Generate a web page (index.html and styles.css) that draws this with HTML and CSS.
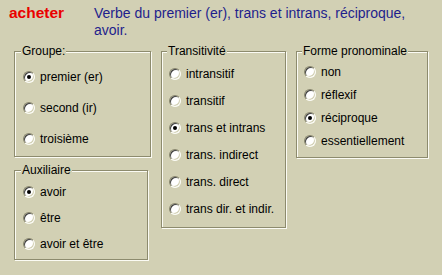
FILE: index.html
```html
<!DOCTYPE html>
<html lang="fr">
<head>
<meta charset="utf-8">
<title>acheter</title>
<link rel="stylesheet" href="styles.css">
</head>
<body>
<div class="header">
  <div class="verb">acheter</div>
  <div class="desc">Verbe du premier (er), trans et intrans, réciproque, avoir.</div>
</div>
<div class="main">
  <div class="col">
    <fieldset class="box groupe">
      <legend>Groupe:</legend>
      <div class="opt"><span class="radio on"></span><span>premier (er)</span></div>
      <div class="opt"><span class="radio"></span><span>second (ir)</span></div>
      <div class="opt"><span class="radio"></span><span>troisième</span></div>
    </fieldset>
    <fieldset class="box aux">
      <legend>Auxiliaire</legend>
      <div class="opt"><span class="radio on"></span><span>avoir</span></div>
      <div class="opt"><span class="radio"></span><span>être</span></div>
      <div class="opt"><span class="radio"></span><span>avoir et être</span></div>
    </fieldset>
  </div>
  <fieldset class="box trans">
    <legend>Transitivité</legend>
    <div class="opt"><span class="radio"></span><span>intransitif</span></div>
    <div class="opt"><span class="radio"></span><span>transitif</span></div>
    <div class="opt"><span class="radio on"></span><span>trans et intrans</span></div>
    <div class="opt"><span class="radio"></span><span>trans. indirect</span></div>
    <div class="opt"><span class="radio"></span><span>trans. direct</span></div>
    <div class="opt"><span class="radio"></span><span>trans dir. et indir.</span></div>
  </fieldset>
  <fieldset class="box forme">
    <legend>Forme pronominale</legend>
    <div class="opt"><span class="radio"></span><span>non</span></div>
    <div class="opt"><span class="radio"></span><span>réflexif</span></div>
    <div class="opt"><span class="radio on"></span><span>réciproque</span></div>
    <div class="opt"><span class="radio"></span><span>essentiellement</span></div>
  </fieldset>
</div>
</body>
</html>
```
FILE: styles.css
```css
html, body {
  margin: 0;
  padding: 0;
}
body {
  background: #d2d0b4;
  width: 442px;
  height: 275px;
  overflow: hidden;
  font-family: "Liberation Sans", Arial, sans-serif;
  color: #000;
}
.header {
  display: flex;
  align-items: baseline;
  padding: 4px 0 0 9px;
}
.verb {
  width: 85px;
  flex: none;
  color: #ea0000;
  font-weight: bold;
  font-size: 15.5px;
  line-height: 17px;
}
.desc {
  width: 335px;
  color: #1e1e8c;
  font-size: 14px;
  line-height: 17px;
}
.main {
  display: flex;
  align-items: flex-start;
  gap: 10px;
  margin-top: 5px;
  padding-left: 14px;
}
.col {
  display: flex;
  flex-direction: column;
  align-items: flex-start;
  gap: 6px;
}
.box {
  margin: 0;
  min-width: 0;
  border: 1px solid #8d8b6e;
  box-shadow: inset 1px 1px 0 #fbfbf4, 1px 1px 0 #fbfbf4;
  font-size: 12px;
  box-sizing: border-box;
}
.box legend {
  padding: 0 1px;
  margin-left: -2px;
  line-height: 14px;
  font-size: 12px;
  background: #d2d0b4;
  position: relative;
}
.opt {
  display: flex;
  align-items: center;
  gap: 5px;
  white-space: nowrap;
}
.radio {
  flex: none;
  width: 12px;
  height: 12px;
  box-sizing: border-box;
  border-radius: 50%;
  border: 1px solid;
  border-color: #86846a #fbfbf4 #fbfbf4 #86846a;
  background: #fff;
  box-shadow: inset 1px 1px 0 #404040, inset -1px -1px 0 #d2d0b4;
  display: flex;
  align-items: center;
  justify-content: center;
}
.radio.on::after {
  content: "";
  width: 4px;
  height: 4px;
  border-radius: 50%;
  background: #000;
}
.groupe {
  width: 137px;
  padding: 3px 8px 2px 8px;
}
.groupe .opt { height: 31px; }
.aux {
  width: 134px;
  padding: 2px 8px 2px 8px;
}
.aux .opt { height: 26px; }
.trans {
  width: 125px;
  padding: 2px 7px 5px 7px;
}
.trans .opt { height: 27px; }
.forme {
  width: 132px;
  padding: 2px 7px 5px 7px;
}
.forme .opt { height: 23px; }
```
